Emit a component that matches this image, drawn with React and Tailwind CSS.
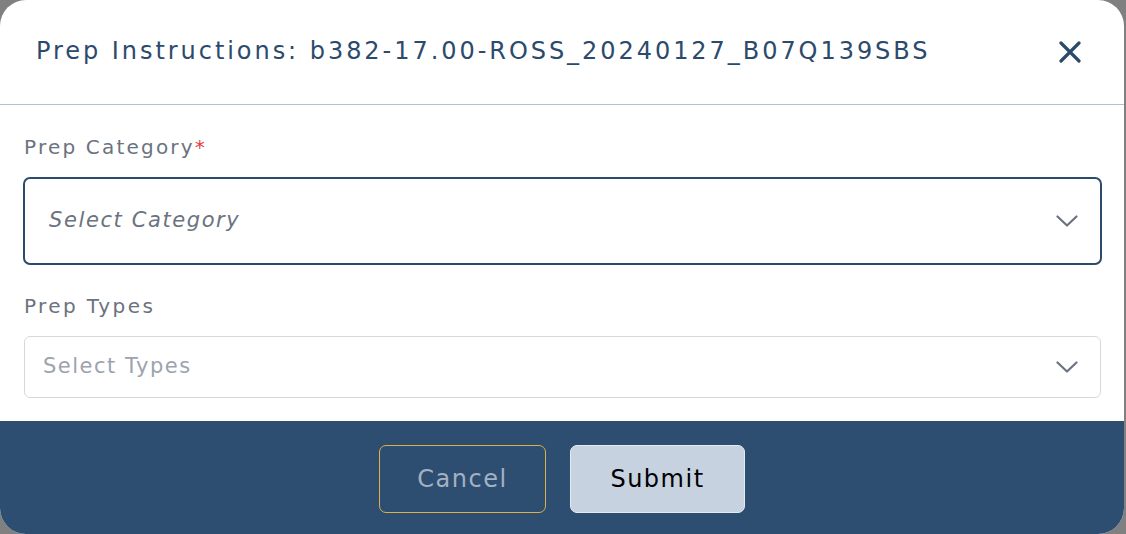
import React from "react";

const Chevron = () => (
  <svg width="22" height="12" viewBox="0 0 22 12" fill="none">
    <path d="M1.5 1.5 L11 10.5 L20.5 1.5" stroke="#6b7280" strokeWidth="2.2" strokeLinecap="round" strokeLinejoin="round" />
  </svg>
);

export default function App() {
  return (
    <div className="w-[1126px] h-[534px] bg-[#808080] overflow-hidden" style={{ fontFamily: '"DejaVu Sans", "Open Sans", sans-serif' }}>
      <div className="w-[1124px] h-[534px] bg-white rounded-[26px] overflow-hidden flex flex-col">
        <div className="h-[105px] flex items-center justify-between pl-[36px] pr-[43px] border-b border-[#b3c2d1] shrink-0">
          <h1 className="text-[24px] text-[#2c4a6b] tracking-[2.95px] leading-none pb-[2px] whitespace-nowrap">
            Prep Instructions: b382-17.00-ROSS_20240127_B07Q139SBS
          </h1>
          <svg width="22" height="22" viewBox="0 0 22 22" fill="none">
            <path d="M2 2 L20 20 M20 2 L2 20" stroke="#2c4a6b" strokeWidth="3.2" strokeLinecap="round" />
          </svg>
        </div>
        <div className="flex-1 px-[23px] pt-[32px]">
          <div className="text-[20px] text-[#6b7280] leading-none h-[24px] tracking-[2.2px] pl-[1px]">
            Prep Category<span className="text-[#e53e3e]">*</span>
          </div>
          <div className="mt-[16px] h-[88px] w-[1079px] border-2 border-[#2c4a6b] rounded-[7px] flex items-center justify-between pl-[24px] pr-[22px]">
            <span className="italic text-[21px] text-[#6b7280] tracking-[1.6px]">Select Category</span>
            <Chevron />
          </div>
          <div className="mt-[31px] text-[20px] text-[#6b7280] leading-none h-[24px] pl-[1px] tracking-[2.4px]">Prep Types</div>
          <div className="mt-[16px] ml-[1px] h-[62px] w-[1077px] border border-[#d5d8dd] rounded-[6px] flex items-center justify-between pl-[18px] pr-[22px]">
            <span className="text-[21px] text-[#9ca3af] tracking-[1.5px]">Select Types</span>
            <Chevron />
          </div>
        </div>
        <div className="h-[113px] bg-[#2d4e70] flex items-center justify-center gap-[24px] shrink-0 pt-[2px]">
          <button className="w-[167px] h-[68px] rounded-[7px] border border-[#d9b24a] text-[#a3b1c2] text-[24px] tracking-[1.5px]">Cancel</button>
          <button className="w-[175px] h-[68px] rounded-[7px] border border-[#e5ebf1] bg-[#c6d2df] text-black text-[24px] tracking-[1.5px]">Submit</button>
        </div>
      </div>
    </div>
  );
}
